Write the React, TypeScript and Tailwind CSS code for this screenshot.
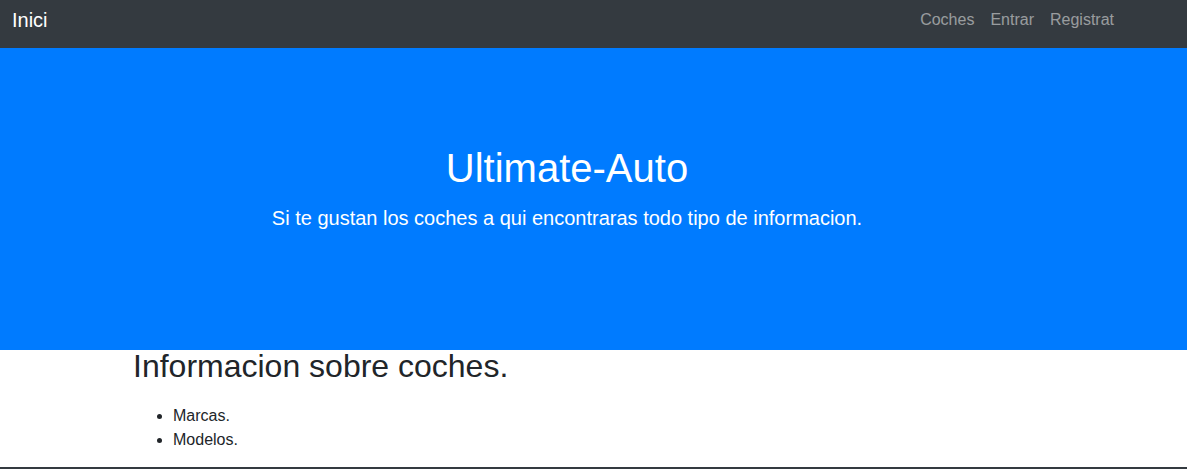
import React from 'react';

const navLinks = ['Coches', 'Entrar', 'Registrat'];

const App: React.FC = () => {
  return (
    <div className="min-h-screen bg-white text-[#212529]" style={{ fontFamily: '"Liberation Sans", Arial, sans-serif' }}>
      <nav className="h-12 bg-[#343a40] flex items-center justify-between pl-3 pr-[65px] pb-2">
        <a href="#" className="text-xl leading-[30px] text-white">
          Inici
        </a>
        <ul className="flex items-center">
          {navLinks.map((link) => (
            <li key={link}>
              <a href="#" className="block px-2 text-base leading-6 text-white/50">
                {link}
              </a>
            </li>
          ))}
        </ul>
      </nav>

      <section className="h-[302px] bg-[#007bff] text-white pt-[96px] pr-[53px]">
        <div className="text-center">
          <h1 className="text-[40px] leading-[48px] font-normal">Ultimate-Auto</h1>
          <p className="mt-[11px] text-xl leading-[30px]">
            Si te gustan los coches a qui encontraras todo tipo de informacion.
          </p>
        </div>
      </section>

      <main className="pl-[133px] pb-[15px]">
        <h2 className="-mt-[3px] text-[32px] leading-[38px] font-normal">Informacion sobre coches.</h2>
        <ul className="mt-[19px] list-disc pl-10 text-base leading-6">
          <li>Marcas.</li>
          <li>Modelos.</li>
        </ul>
      </main>

      <footer className="h-[2px] bg-[#343a40]" />
    </div>
  );
};

export default App;
